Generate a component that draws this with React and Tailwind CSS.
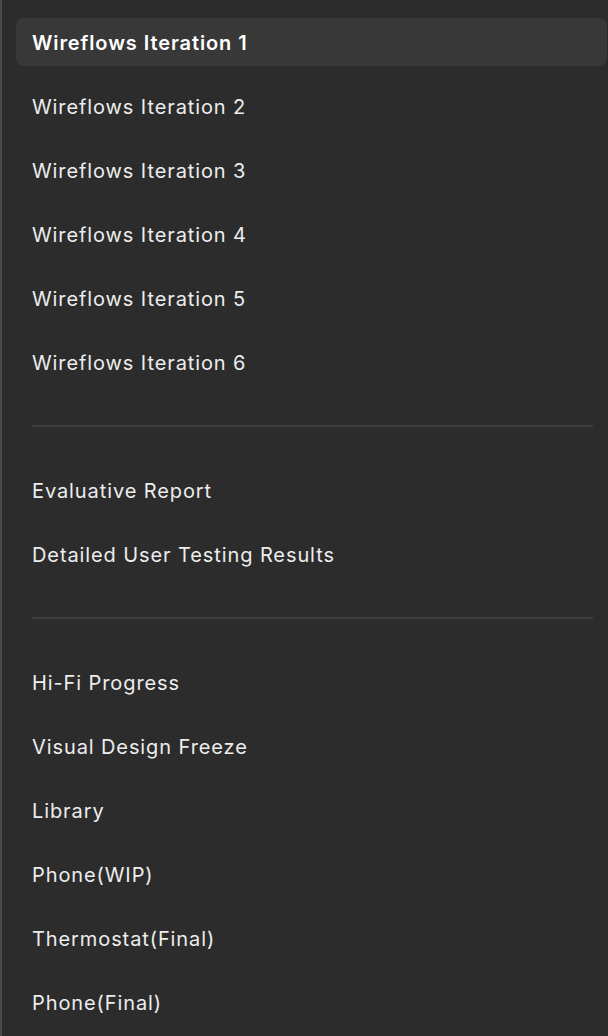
const GROUPS = [
  [
    'Wireflows Iteration 1',
    'Wireflows Iteration 2',
    'Wireflows Iteration 3',
    'Wireflows Iteration 4',
    'Wireflows Iteration 5',
    'Wireflows Iteration 6',
  ],
  ['Evaluative Report', 'Detailed User Testing Results'],
  ['Hi-Fi Progress', 'Visual Design Freeze', 'Library', 'Phone(WIP)', 'Thermostat(Final)', 'Phone(Final)'],
];

export default function App() {
  return (
    <div
      className="h-[1036px] w-[608px] overflow-hidden bg-[#2c2c2c] border-l-2 border-[#4a4a4a] pt-[18px] pl-[14px] pr-px"
      style={{ fontFamily: 'Inter, "Noto Sans", sans-serif' }}
    >
      {GROUPS.map((group, gi) => (
        <div key={gi}>
          {gi > 0 && <div className="ml-4 mr-[14px] my-[39px] h-[2px] bg-[#3f3f3f]" />}
          <div className="flex flex-col gap-4">
            {group.map((label) => {
              const active = label === 'Wireflows Iteration 1';
              return (
                <div
                  key={label}
                  className={
                    active
                      ? 'h-12 flex items-center px-4 pt-px rounded-lg bg-[#383838] text-white font-semibold text-[20px] tracking-[0.9px]'
                      : 'h-12 flex items-center px-4 pt-px rounded-lg text-[#ededed] text-[20px] tracking-[0.9px]'
                  }
                >
                  {label}
                </div>
              );
            })}
          </div>
        </div>
      ))}
    </div>
  );
}
